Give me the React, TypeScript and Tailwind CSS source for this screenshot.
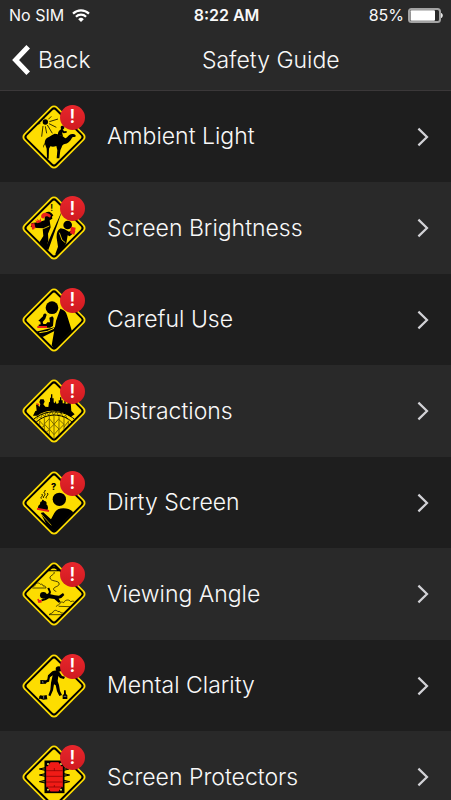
import { useId, type ReactNode } from 'react';

const YELLOW = '#fddd00';
const RED = '#e8201b';

interface Topic {
  slug: string;
  title: string;
  art: ReactNode;
}

const topics: Topic[] = [
  { slug: 'ambient-light', title: 'Ambient Light', art: <CamelArt /> },
  { slug: 'screen-brightness', title: 'Screen Brightness', art: <GlareArt /> },
  { slug: 'careful-use', title: 'Careful Use', art: <CarefulArt /> },
  { slug: 'distractions', title: 'Distractions', art: <BridgeArt /> },
  { slug: 'dirty-screen', title: 'Dirty Screen', art: <DirtyArt /> },
  { slug: 'viewing-angle', title: 'Viewing Angle', art: <FallingArt /> },
  { slug: 'mental-clarity', title: 'Mental Clarity', art: <BottlesArt /> },
  { slug: 'screen-protectors', title: 'Screen Protectors', art: <ProtectorArt /> },
];

export default function App() {
  return (
    <div className="flex h-screen flex-col overflow-hidden bg-[#1e1e1e] font-['Inter','Liberation_Sans',sans-serif] text-[#f8f8f8]">
      <header className="shrink-0 border-b border-[#3b3839] bg-[#292929]">
        <StatusBar />
        <div className="flex h-[60px] items-center pl-3">
          <button type="button" className="flex items-center gap-2 text-[23px] font-light">
            <svg viewBox="0 0 18 30" className="h-[30px] w-[18px]" fill="none" stroke="#fff" strokeWidth="5">
              <path d="M16.2 1.8 3.6 15 16.2 28.2" />
            </svg>
            Back
          </button>
          <h1 className="flex-1 text-center text-[23px] font-light">Safety Guide</h1>
        </div>
      </header>

      <ul className="min-h-0 flex-1 overflow-y-auto [scrollbar-width:none]">
        {topics.map((t) => (
          <li key={t.slug} className="odd:h-[91px] odd:bg-[#1e1e1e] even:h-[92px] even:bg-[#292929]">
            <a href={`#${t.slug}`} className="flex h-full items-center pr-[22px] pl-[21px]">
              <RoadSign>{t.art}</RoadSign>
              <span className="ml-5 flex-1 text-[23px] font-light">{t.title}</span>
              <svg viewBox="0 0 12 20" className="h-5 w-3" fill="none" stroke="#d2d2d6" strokeWidth="2.2">
                <path d="M1.4 1.6 10 10 1.4 18.4" />
              </svg>
            </a>
          </li>
        ))}
      </ul>
    </div>
  );
}

function StatusBar() {
  return (
    <div className="grid h-[30px] grid-cols-[1fr_auto_1fr] items-center pr-[7px] pl-[9px] text-base">
      <div className="flex items-center gap-2">
        No SIM
        <svg viewBox="0 0 18 13" className="h-[13px] w-[18px]" fill="none" stroke="#fff" strokeWidth="2.2">
          <path d="M1 4.6a11.6 11.6 0 0 1 16 0" />
          <path d="M3.9 7.7a7.4 7.4 0 0 1 10.2 0" />
          <path d="M9 13 6.2 10.2a4 4 0 0 1 5.6 0z" fill="#fff" stroke="none" />
        </svg>
      </div>
      <div className="font-semibold">8:22 AM</div>
      <div className="flex items-center justify-end gap-1">
        85%
        <svg viewBox="0 0 36 15" className="h-[15px] w-9">
          <rect x="1" y="1" width="31" height="13" rx="2.5" fill="#292929" stroke="#a3a3a3" strokeWidth="2" />
          <rect x="2.5" y="2.2" width="24.5" height="10.6" rx="1" fill="#fff" />
          <path d="M33 5c2.4.6 2.4 4.4 0 5z" fill="#e8e8e8" />
        </svg>
      </div>
    </div>
  );
}

// yellow diamond plate, the art is drawn on a 198 unit grid that starts at 33,33
function RoadSign({ children }: { children: ReactNode }) {
  const clipId = useId();

  return (
    <div className="relative size-[66px] shrink-0">
      <svg viewBox="33 33 198 198" className="size-full" aria-hidden="true">
        <clipPath id={clipId}>
          <path d="M132 46 218 132 132 218 46 132z" />
        </clipPath>
        <rect x="61" y="61" width="142" height="142" rx="14" fill={YELLOW} transform="rotate(45 132 132)" />
        <rect
          x="69"
          y="69"
          width="126"
          height="126"
          rx="9"
          fill="none"
          stroke="#000"
          strokeWidth="6"
          transform="rotate(45 132 132)"
        />
        <g clipPath={`url(#${clipId})`}>{children}</g>
      </svg>
      <span className="absolute top-px right-0.5 flex size-[25px] items-center justify-center rounded-full bg-linear-to-b from-[#e8262c] to-[#cf1a20] text-lg leading-none font-semibold text-white">
        !
      </span>
    </div>
  );
}

function CamelArt() {
  return (
    <g>
      <circle cx="106" cy="87" r="8" />
      <path
        d="M92 83 80 79M91 91 76 96M99 99 95 131M106 100 110 121M112 96 127 121M117 92 139 103M118 86 144 78M115 79 124 70M103 76 102 69"
        stroke="#000"
        strokeWidth="2.4"
        fill="none"
      />
      <path d="M104 151c0-11 5-17 14-20 5-2 9-7 16-9 8 0 12 3 17 5 6 1 11 7 15 9 5-1 7-7 12-10 5-4 15-3 18 0 3 3 0 6-3 6-5 0-7 1-9 6-4 8-11 14-20 15-6 2-8 5-9 10l-4 9-3 24h-8l2-24-3-13c-7 3-12 3-18 1l-4 7-1 30h-7l2-4-1-26-5-14c-3 4-3 8-4 12-2-5-1-9 3-14z" />
      <path d="M144 126c-1-8 3-14 9-17l-1-7c2-6 10-5 11 1 0 4-2 6-5 7l5 5 7-1v5l-9 2-5-3 3 12z" />
    </g>
  );
}

function GlareArt() {
  return (
    <g>
      <path d="M158 76 115 198l-10-4z" />
      <text x="121" y="82" fontSize="26" fontWeight="600">
        !
      </text>
      <path d="M104 92c0-9 15-13 21-4l5 6-4 4 1 6-8 5 1 8 2 13-8 19 1 18-6 30-22-20 13-21-2-22-24-3-12-3 3-11 20-2 19-6z" />
      <path d="M94 101c-4-15 17-21 29-6l-3 6c-9-7-15-6-20 3z" fill={RED} />
      <path d="m62 119 11-2 4 17-10 3z" fill={RED} />
      <path d="m75 108 8 4-2-8 7 6 4-8 2 12-12 4z" fill={RED} />
      <path d="m73 133 27 1 18-8" stroke={YELLOW} strokeWidth="2.5" fill="none" />
      <circle cx="173" cy="123" r="13" />
      <path d="m152 133 12 3 13 7 14-6 5 6-17 14-6-3-4 24-8 16 4 10-18 18-11-12 8-22-4-26c-1-16 3-24 12-29z" />
      <path d="m183 128 14 3-4 21-13-4z" fill={RED} />
      <path d="m148 146 8 22 10 8" stroke={YELLOW} strokeWidth="2.5" fill="none" />
    </g>
  );
}

function CarefulArt() {
  return (
    <g>
      <circle cx="126" cy="95" r="19" />
      <path d="M151 98c10 3 18 9 20 20l15 48-53 55-8-13 13-73z" />
      <path d="M99 121c0-8 7-12 11-5l-4 12-8 10 2 6h8l4-5h8l-2-14 9-4 4 5-2 24-9 5h-34v-9l6-1-1-8-6-3z" />
      <path d="M82 153h29" stroke={RED} strokeWidth="6" />
      <path d="m73 168 17-4 44-10 4 9-40 20z" />
      <path d="m88 170 24-4 20-9" stroke={YELLOW} strokeWidth="3" fill="none" />
    </g>
  );
}

function BridgeArt() {
  return (
    <g>
      <path d="m69 146 7-14 4-1-2-18 5-1 5 8 3-8-3-7 3-8h10l3 7-4 8 6 7 9 1 2-14 3-2V92h3V82h4v12h4v12l4 3 1-8 4 10 6-3v-8h4v-9h4v9h4v9h5v-8h4v10l8-2 2-5 5 2 2 26 10 10-12 8c-30-24-72-25-100-4z" />
      <path d="m78 108 10 3-3 6z" fill={RED} />
      <path d="M72 156c35-29 88-29 122 1M78 166c32-29 79-29 109 0" stroke="#000" strokeWidth="3" fill="none" />
      <path
        d="m80 157 6-9 6 6 5-13 7 8 5-13 7 9 8-13 7 13 8-12 7 14 8-9 5 13 8-6 5 12"
        stroke="#000"
        strokeWidth="1.6"
        fill="none"
      />
      <path
        d="M89 160v23M103 151v47M118 147v66M132 145v77M147 147v64M162 152v45M175 161v22M89 162l14 15-12 7M118 155l-15 16 15 17-12 10M118 155l14 17-14 14 14 17M147 155l-15 17 15 14-15 17M147 158l15 14-15 16M175 163l-13 17"
        stroke="#6b5c00"
        strokeWidth="2.6"
        fill="none"
      />
    </g>
  );
}

function DirtyArt() {
  return (
    <g>
      <text x="123" y="94" fontSize="27" fontWeight="800">
        ?
      </text>
      <circle cx="148" cy="121" r="20" />
      <path d="m92 162 8-2 23 21 10-19c6-10 15-14 27-14 12 0 20 3 27 9l6 11-61 55-17-15z" />
      <path d="M85 150c-3-7 1-12 5-14 0-7 2-9 6-9-1-5 4-6 6-2 8 1 9 7 7 11 6 5 6 12 3 18z" />
      <path d="m81 149 36 7" stroke={RED} strokeWidth="6" />
      <path
        d="M94 119c-5-5 8-7 1-14M101 117c-4-6 10-8 1-16 1-4 4-4 4-8M109 118c-4-6 9-9 3-16"
        stroke="#000"
        strokeWidth="3"
        fill="none"
      />
      <path d="m92 163 15 17 17 19" stroke={YELLOW} strokeWidth="2" fill="none" />
    </g>
  );
}

function FallingArt() {
  return (
    <g>
      <path d="M113 64c4-19 32-19 36 0z" />
      <path d="M121 61c3-7 17-7 20 0z" fill={YELLOW} />
      <path
        d="M132 66c4 7-11 9-12 17 0 12 24 8 27 16 4 12-19 10-16 20 2 5 6 2 7 6"
        stroke="#000"
        strokeWidth="2.2"
        fill="none"
      />
      <circle cx="100" cy="136" r="10" />
      <path d="m107 132 7-1 3-5-5-12 6-1 5 13-2 7 14 3 12 1 12-8 4 6-9 9-8 2 6 10-6 2-13-11-16-2-9 5-12 4-3-5 11-4z" />
      <path d="m84 147 3 9 8-1M87 152l8 1" stroke={RED} strokeWidth="5" fill="none" />
      <path
        d="M67 112c3-6 7-2 8-6 4-9 12-9 16-3 5-2 8 1 8 5 5-1 9 1 9 6H67M139 170c0-5 7-4 10-8 2-7 8-7 12-4 4-9 16-11 21-3 7-4 12 0 13 4M146 169l36 1M117 194c3-5 10-2 12-8 4-7 12-6 15-1 5-2 8 1 9 4 6-1 10 1 11 5z"
        stroke="#000"
        strokeWidth="2"
        fill="none"
      />
    </g>
  );
}

function BottlesArt() {
  return (
    <g>
      <ellipse cx="146" cy="81" rx="9" ry="8" />
      <path d="M127 88c7-4 16-3 21 2l8 12 9 2-3 7-12-3-5-6-2 15 4 12 3 18 6 12-8 3-7-14-4-18-5-3-3 18-8 18-6-3 6-16 2-22 5-22-8 6-3 14-6-2 3-18z" />
      <path d="m91 114 17 1 5-3 2 7-6 3-1 3-17 1zM88 163l3-3 8 1 11-2 2 13-12 1-9-3-4 1z" />
      <path d="M162 145h5l1 11 4 4v11h-14v-11l4-4z" />
      <path d="m98 117 1 7M101 162v8M161 163h8" stroke="#77776c" strokeWidth="3" />
    </g>
  );
}

function ProtectorArt() {
  return (
    <g>
      <path
        d="m105 104-17 4 17 4M105 122l-17 4 17 4M105 142l-17 4 17 4M162 122l17 4-17 4M162 142l17 4-17 4M162 104l15 4-15 4"
        stroke="#000"
        strokeWidth="3"
        fill="#7f7412"
      />
      <rect x="106" y="85" width="55" height="93" fill="#f01b16" stroke="#000" strokeWidth="5" />
      <path d="M108 113h50M108 130h50M108 147h50M108 162h50M133 113v-8M133 162v-6" stroke="#7a0000" strokeWidth="2" />
      <path d="M108 87h14l-9 13h-5zM159 87h-14l9 13h5zM108 176h14l-9-13h-5zM159 176h-14l9-13h5z" />
      <g fill="#e5e05a">
        <circle cx="114" cy="93" r="3" />
        <circle cx="153" cy="93" r="3" />
        <circle cx="114" cy="170" r="3" />
        <circle cx="153" cy="170" r="3" />
      </g>
    </g>
  );
}
